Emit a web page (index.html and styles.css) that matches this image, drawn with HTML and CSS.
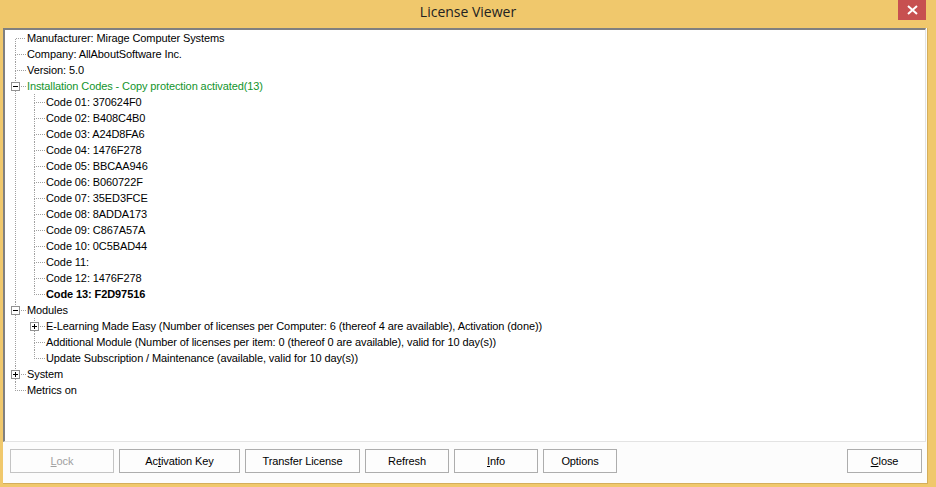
FILE: index.html
```html
<html>
<head>
    <meta charset="UTF-8">
    <title>License Viewer</title>
    <link rel="stylesheet" href="styles.css">
</head>
<body>

    <div class="titlebar">
        <span class="title">License Viewer</span>
        <button class="close-x">
            <svg width="11" height="10" viewBox="0 0 11 10"><path d="M1 1 L10 9 M10 1 L1 9" stroke="#fff" stroke-width="2"/></svg>
        </button>
    </div>

    <div class="client">
        <div class="tree">
            <ul class="root">
                <li class="first"><span class="label">Manufacturer: Mirage Computer Systems</span></li>
                <li><span class="label">Company: AllAboutSoftware Inc.</span></li>
                <li><span class="label">Version: 5.0</span></li>
                <li>
                    <span class="box minus"></span>
                    <span class="label green">Installation Codes - Copy protection activated(13)</span>
                    <ul>
                        <li><span class="label">Code 01: 370624F0</span></li>
                        <li><span class="label">Code 02: B408C4B0</span></li>
                        <li><span class="label">Code 03: A24D8FA6</span></li>
                        <li><span class="label">Code 04: 1476F278</span></li>
                        <li><span class="label">Code 05: BBCAA946</span></li>
                        <li><span class="label">Code 06: B060722F</span></li>
                        <li><span class="label">Code 07: 35ED3FCE</span></li>
                        <li><span class="label">Code 08: 8ADDA173</span></li>
                        <li><span class="label">Code 09: C867A57A</span></li>
                        <li><span class="label">Code 10: 0C5BAD44</span></li>
                        <li><span class="label">Code 11:</span></li>
                        <li><span class="label">Code 12: 1476F278</span></li>
                        <li><span class="label bold">Code 13: F2D97516</span></li>
                    </ul>
                </li>
                <li>
                    <span class="box minus"></span>
                    <span class="label">Modules</span>
                    <ul>
                        <li><span class="box plus"></span><span class="label">E-Learning Made Easy (Number of licenses per Computer: 6 (thereof 4 are available), Activation (done))</span></li>
                        <li><span class="label">Additional Module (Number of licenses per item: 0 (thereof 0 are available), valid for 10 day(s))</span></li>
                        <li><span class="label">Update Subscription / Maintenance (available, valid for 10 day(s))</span></li>
                    </ul>
                </li>
                <li><span class="box plus"></span><span class="label">System</span></li>
                <li><span class="label">Metrics on</span></li>
            </ul>
        </div>

        <div class="buttons">
            <button class="btn btn-lock" disabled><u>L</u>ock</button>
            <button class="btn btn-key">Ac<u>t</u>ivation Key</button>
            <button class="btn btn-transfer">Transfer License</button>
            <button class="btn btn-refresh">Refresh</button>
            <button class="btn btn-info"><u>I</u>nfo</button>
            <button class="btn btn-options">Options</button>
            <button class="btn btn-close"><u>C</u>lose</button>
        </div>
    </div>

</body>
</html>
```

FILE: styles.css
```css
body {
    margin: 0;
    width: 936px;
    height: 487px;
    overflow: hidden;
    background-color: #f0c86c;
    font-family: "Liberation Sans", Arial, sans-serif;
    font-size: 11px;
    letter-spacing: -0.1px;
    color: #000;
}
.titlebar {
    height: 28px;
    display: flex;
    justify-content: center;
    position: relative;
}
.title {
    font-family: "Open Sans", "Noto Sans", sans-serif;
    font-size: 14px;
    letter-spacing: 0;
    line-height: 24px;
    color: #222;
}
.close-x {
    position: absolute;
    top: 0;
    left: 898px;
    width: 28px;
    height: 20px;
    border: none;
    padding: 0;
    background-color: #c75050;
    display: flex;
    align-items: center;
    justify-content: center;
}
.client {
    margin-left: 3px;
    width: 924px;
    height: 455px;
    background-color: #fcfcfc;
    border-right: 1px solid #d4ae5c;
    border-bottom: 1px solid #d4ae5c;
    display: flex;
    flex-direction: column;
}
.tree {
    height: 411px;
    margin-right: 1px;
    background-color: #fff;
    border-top: 2px solid #808080;
    border-left: 2px solid #808080;
    border-right: 1px solid #e3e3e3;
    border-bottom: 1px solid #e3e3e3;
    overflow: hidden;
}
.tree ul {
    list-style: none;
    margin: 0;
    padding: 0 0 0 7px;
}
.tree ul.root {
    padding-left: 10px;
}
.tree li {
    position: relative;
    padding-left: 12px;
    line-height: 16px;
    white-space: nowrap;
}
.tree li::before {
    content: "";
    position: absolute;
    left: 0;
    top: 0;
    width: 10px;
    height: 8px;
    border-left: 1px dotted #a0a0a0;
    border-bottom: 1px dotted #a0a0a0;
}
.tree li.first::before {
    border-left: none;
    left: 1px;
    width: 9px;
}
.tree li::after {
    content: "";
    position: absolute;
    left: 0;
    top: 9px;
    bottom: 0;
    border-left: 1px dotted #a0a0a0;
}
.tree li:last-child::after {
    display: none;
}
.label {
    display: inline-block;
    height: 16px;
}
.green {
    color: #12942c;
}
.bold {
    font-weight: bold;
}
.box {
    position: absolute;
    left: -4px;
    top: 4px;
    width: 7px;
    height: 7px;
    border: 1px solid #919191;
    background-color: #fff;
    z-index: 1;
}
.box::before {
    content: "";
    position: absolute;
    left: 1px;
    top: 3px;
    width: 5px;
    height: 1px;
    background-color: #000;
}
.box.plus::after {
    content: "";
    position: absolute;
    left: 3px;
    top: 1px;
    width: 1px;
    height: 5px;
    background-color: #000;
}
.buttons {
    display: flex;
    gap: 5px;
    padding: 7px 5px 0 7px;
}
.btn {
    height: 24px;
    border: 1px solid #adadad;
    background-color: #fdfdfd;
    font-family: "Liberation Sans", Arial, sans-serif;
    font-size: 11px;
    letter-spacing: -0.1px;
    color: #000;
    padding: 0;
}
.btn:disabled {
    color: #a0a0a0;
    border-color: #c4c4c4;
}
.btn-lock { width: 104px; }
.btn-key { width: 121px; }
.btn-transfer { width: 115px; }
.btn-refresh { width: 84px; }
.btn-info { width: 84px; }
.btn-options { width: 74px; }
.btn-close {
    width: 75px;
    margin-left: auto;
}
```
